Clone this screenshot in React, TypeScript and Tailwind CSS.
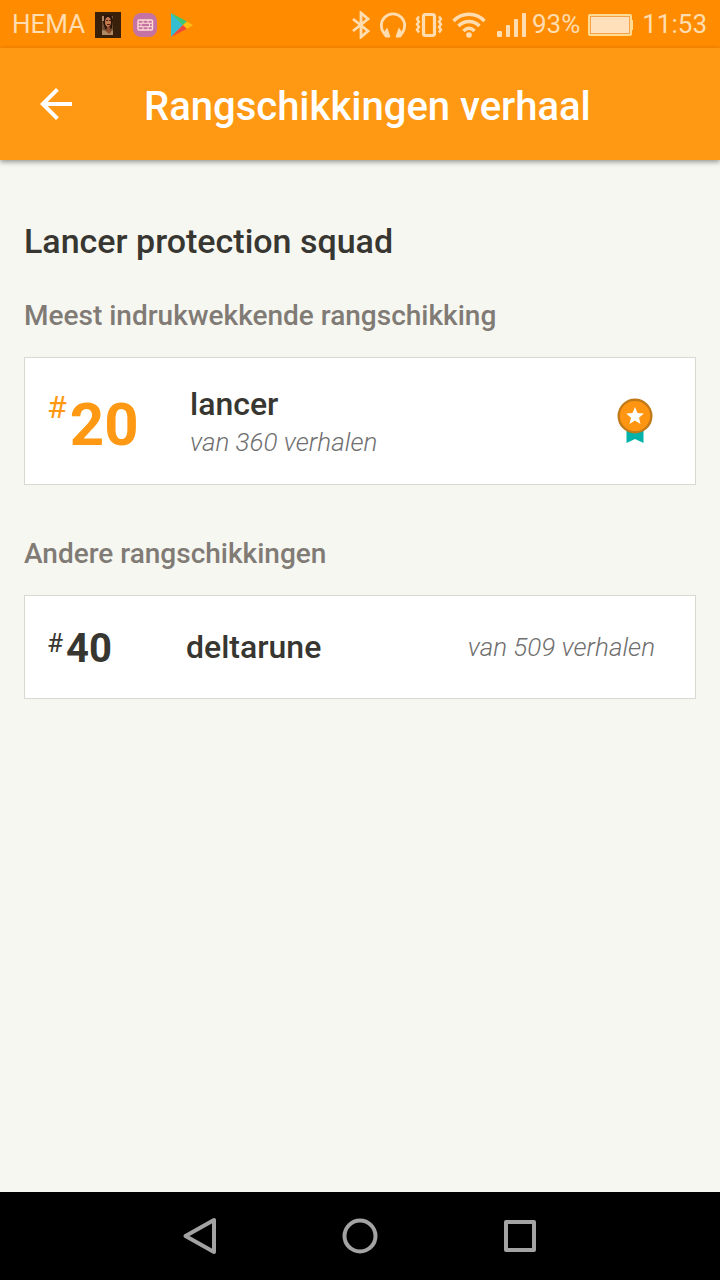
const rankings = [{ rank: 40, tag: "deltarune", total: 509 }]

function StatusBar() {
  return (
    <div className="flex h-12 items-center justify-between bg-[#ff8c00] pt-px pr-[13px] pl-3 text-[26px] text-[#ffddb0]">
      <div className="flex items-center">
        <span className="mr-[10px]">HEMA</span>
        <svg className="mr-3 size-[26px]" viewBox="0 0 26 26" aria-hidden="true">
          <path fill="#39200a" d="M0 0h26v26H0z" />
          <path fill="#72533a" d="M7 4h11v19H7z" />
          <path fill="#2a1508" d="M9 3h7l2 5-1 8-3 3-4-2-2-7z" />
          <ellipse cx="13" cy="10" rx="3" ry="5" fill="#c37a4c" />
          <path fill="#54200f" d="M11 8h2v1h-2zM14 8h2v1h-2zM12 12h3v1h-3z" />
          <path fill="#b08a65" d="M7 4h2v5H7zM7 18l4 1 3 2 4-3v5H7z" />
          <path fill="#8e4a2a" d="M12 15h3l1 5-2 2-3-3z" />
        </svg>
        <svg className="mr-3 size-6" viewBox="0 0 24 24" aria-hidden="true">
          <rect width="24" height="24" rx="8" fill="#c573a4" />
          <rect x="5" y="7" width="14.500" height="10" rx="1" fill="none" stroke="#ffdcd3" strokeWidth="1.400" />
          <path stroke="#ffdcd3" strokeWidth="1" d="M5 10.300h15M5 13.700h15M10 7v3M15 7v3M8 10v4M16.500 10v4M10 14v3M15 14v3" />
        </svg>
        <svg className="h-6 w-6" viewBox="0 0 24 24" aria-hidden="true">
          <path fill="#35bdd0" d="M2 0v24l12-12z" />
          <path fill="#36c976" d="M2 0l16 8.500-4 3.500z" />
          <path fill="#ef4a3d" d="M2 24l12-12 4 3.700z" />
          <path fill="#ffbe12" d="M18 8.500l6 3.500-6 3.700-4-3.700z" />
        </svg>
      </div>
      <div className="flex items-center">
        <svg className="mr-2 h-7 w-5" viewBox="0 0 20 28" fill="none" stroke="currentColor" strokeWidth="2.800" aria-hidden="true">
          <path d="M2 8l15 12-7 6V2l7 6L2 20" />
        </svg>
        <svg className="mr-2 h-7 w-7" viewBox="0 0 28 28" aria-hidden="true">
          <path fill="none" stroke="currentColor" strokeWidth="2.800" d="M5 22.500C3 20 2.300 17.500 2.300 14.500a11.700 11.700 0 0 1 23.400 0c0 3-.7 5.500-2.700 8" />
          <path fill="currentColor" d="M8.200 16.500l3 8.500c.2 1-.3 1.500-1 1.500H7.500c-1.500 0-3-2-3.500-4zM19.800 16.500l-3 8.500c-.2 1 .3 1.500 1 1.500h2.700c1.500 0 3-2 3.500-4z" />
        </svg>
        <svg className="mr-2 h-7 w-7" viewBox="0 0 28 28" fill="none" stroke="currentColor" aria-hidden="true">
          <rect x="8.500" y="3.500" width="11" height="21" rx="2" strokeWidth="3.200" />
          <path strokeWidth="2.400" d="M4 5.500L2 8l2 2.700-2 2.600L4 16l-2 2.700L4 21.500M24 5.500L26 8l-2 2.700 2 2.600L24 16l2 2.700-2 2.800" />
        </svg>
        <svg className="mr-2 h-7 w-9" viewBox="0 0 36 28" fill="none" stroke="currentColor" strokeWidth="3.400" aria-hidden="true">
          <path d="M2.500 10C11 1 25 1 33.500 10M7.500 15c6-6 15-6 21 0M12.500 20c3.500-3.500 7.500-3.500 11 0" />
          <circle cx="18" cy="24" r="2.800" fill="currentColor" stroke="none" />
        </svg>
        <svg className="mr-[5px] h-7 w-8" viewBox="0 0 32 28" fill="currentColor" aria-hidden="true">
          <rect x="2" y="20" width="5" height="6" rx="1" />
          <rect x="11" y="14" width="4" height="12" rx="1" />
          <rect x="19" y="8" width="4" height="18" rx="1" />
          <rect x="27" y="2" width="4" height="24" rx="1" />
        </svg>
        <span className="mr-2">93%</span>
        <svg className="mr-2 h-6 w-[46px]" viewBox="0 0 46 24" aria-hidden="true">
          <rect x="1" y="2" width="42" height="20" rx="1" fill="none" stroke="#ffdc91" strokeWidth="2" />
          <rect x="3" y="4" width="38" height="16" fill="#ffe0bb" />
          <rect x="2.500" y="3.500" width="39" height="17" fill="none" stroke="#f1a24b" />
          <path fill="#ffdc91" d="M43 7h2v10h-2z" />
        </svg>
        <span>11:53</span>
      </div>
    </div>
  )
}

function Medal() {
  return (
    <svg className="h-12 w-9" viewBox="0 0 36 48" role="img" aria-label="Medaille">
      <path fill="#00b2a9" d="M9.500 30h17v16L18 42l-8.500 4z" />
      <path fill="#08867b" d="M9.500 32h17v2q-8.500 4-17 0z" />
      <circle cx="18" cy="19" r="16.300" fill="#ff9510" stroke="#c27a19" strokeWidth="2.400" />
      <path fill="#fff" d="M18 10l2.500 6 6.300.5-4.800 4.200 1.500 6.300-5.500-3.400-5.500 3.400 1.500-6.300-4.800-4.200 6.300-.5z" />
    </svg>
  )
}

function NavBar() {
  return (
    <nav className="flex h-22 items-center justify-center gap-[120px] bg-black text-[#a3a3a3]">
      <button type="button" aria-label="Terug">
        <svg className="size-10" viewBox="0 0 40 40" fill="none" stroke="currentColor" strokeWidth="4" strokeLinejoin="round">
          <path d="M34 4v32L5.500 20z" />
        </svg>
      </button>
      <button type="button" aria-label="Startscherm">
        <svg className="size-10" viewBox="0 0 40 40" fill="none" stroke="currentColor" strokeWidth="4">
          <circle cx="20" cy="20" r="15.500" />
        </svg>
      </button>
      <button type="button" aria-label="Recente apps">
        <svg className="size-10" viewBox="0 0 40 40" fill="none" stroke="currentColor" strokeWidth="4" strokeLinejoin="round">
          <path d="M6 6h28v28H6z" />
        </svg>
      </button>
    </nav>
  )
}

export default function App() {
  return (
    <div className="flex min-h-screen flex-col bg-[#f6f7f1] font-['Roboto',sans-serif] text-[#373630]">
      <StatusBar />
      <header className="flex h-28 items-center bg-[#ff9913] px-8 text-white shadow-[0_2px_5px_rgba(0,0,0,0.4)]">
        <button type="button" aria-label="Terug" className="mr-16">
          <svg className="size-12" viewBox="0 0 24 24" fill="currentColor">
            <path d="M20 11H7.830l5.590-5.590L12 4l-8 8 8 8 1.410-1.410L7.830 13H20v-2z" />
          </svg>
        </button>
        <h1 className="pt-1.5 text-[40px] font-medium">Rangschikkingen verhaal</h1>
      </header>

      <main className="flex-1 px-6 pt-15">
        <h2 className="mb-9 text-[34px] leading-[42px] font-medium">Lancer protection squad</h2>

        <section className="mb-[51px]">
          <h3 className="mb-[23px] text-[28px] leading-9 font-medium text-[#817b76]">Meest indrukwekkende rangschikking</h3>
          <div className="flex h-32 items-center border border-[#d7d8cf] bg-white pr-[42px] pl-[22px]">
            <div className="flex w-[143px] items-start pt-2 text-[#ff9913]">
              <span className="mr-[3px] text-[32px] leading-9">#</span>
              <span className="text-[60px] leading-[72px] font-bold">20</span>
            </div>
            <div className="flex-1 pt-0.5">
              <p className="text-[32px] leading-10 font-medium">lancer</p>
              <p className="text-[26px] leading-9 font-light italic text-[#6f6f6f]">van 360 verhalen</p>
            </div>
            <Medal />
          </div>
        </section>

        <section>
          <h3 className="mb-[23px] text-[28px] leading-9 font-medium text-[#817b76]">Andere rangschikkingen</h3>
          {rankings.map((item) => (
            <div key={item.tag} className="flex h-26 items-center border border-[#d7d8cf] bg-white pr-10 pl-[22px]">
              <div className="flex w-[139px] items-start pt-1">
                <span className="mr-[3px] text-[26px] leading-9">#</span>
                <span className="text-[40px] leading-[48px] font-bold">{item.rank}</span>
              </div>
              <p className="flex-1 text-[32px] leading-10 font-medium">{item.tag}</p>
              <p className="text-[26px] leading-9 font-light italic text-[#6f6f6f]">van {item.total} verhalen</p>
            </div>
          ))}
        </section>
      </main>

      <NavBar />
    </div>
  )
}
